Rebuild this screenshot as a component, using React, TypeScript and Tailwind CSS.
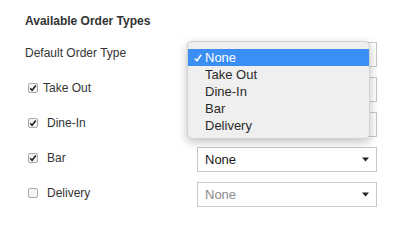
import React from "react";

const FONT = { fontFamily: '"Liberation Sans", Arial, Helvetica, sans-serif' };

const ORDER_TYPES = ["None", "Take Out", "Dine-In", "Bar", "Delivery"];

function Caret() {
  return (
    <svg width="7" height="5" viewBox="0 0 7 5" className="shrink-0">
      <path d="M0 0.5 L7 0.5 L3.5 4.5 Z" fill="#222" />
    </svg>
  );
}

// covered = sits under the open menu, so its value is not visible
function FakeSelect({ value = "None", disabled = false, covered = false }: { value?: string; disabled?: boolean; covered?: boolean }) {
  return (
    <div className="w-[180px] h-[25px] border border-[#c8c8c8] bg-white flex items-center justify-between pl-[7px] pr-[7px]">
      <span className={disabled ? "text-[13px] text-[#8a8a8a]" : "text-[13px] text-[#1a1a1a]"}>{covered ? "" : value}</span>
      <Caret />
    </div>
  );
}

function Check({ checked }: { checked: boolean }) {
  return (
    <span className="w-[10px] h-[10px] rounded-[2px] border border-[#a9a9a9] bg-[#f4f4f4] flex items-center justify-center shrink-0">
      {checked && (
        <svg width="8" height="8" viewBox="0 0 8 8">
          <path d="M1.2 4.2 L3.1 6.2 L6.8 1.4" stroke="#222" strokeWidth="1.6" fill="none" />
        </svg>
      )}
    </span>
  );
}

export default function App() {
  const rows = [
    { label: "Take Out", checked: true, gap: "ml-[5px]", covered: true },
    { label: "Dine-In", checked: true, gap: "ml-[9px]", covered: true },
    { label: "Bar", checked: true, gap: "ml-[9px]", covered: false },
    { label: "Delivery", checked: false, gap: "ml-[9px]", covered: false },
  ];

  return (
    <div className="relative w-[400px] h-[239px] bg-white overflow-hidden text-[#333]" style={FONT}>
      <div className="pl-[25px] pt-[13px]">
        <h3 className="text-[12px] leading-[16px] font-bold text-[#333]">Available Order Types</h3>

        <div className="mt-[13px] flex flex-col gap-[10px]">
          {/* Default */}
          <div className="flex items-center h-[25px]">
            <span className="w-[172px] text-[12px] -mt-[3px]">Default Order Type</span>
            <FakeSelect covered />
          </div>

          {rows.map((r) => (
            <div key={r.label} className="flex items-center h-[25px]">
              <div className="w-[172px] flex items-center pl-[3px] -mt-[4px]">
                <Check checked={r.checked} />
                <span className={`${r.gap} text-[12px]`}>{r.label}</span>
              </div>
              <FakeSelect disabled={!r.checked} covered={r.covered} />
            </div>
          ))}
        </div>
      </div>

      {/* open dropdown menu */}
      <div className="absolute left-[187px] top-[41px] w-[183px] rounded-[5px] bg-[#efefef] border border-[#d2d2d2] shadow-[0_3px_10px_rgba(0,0,0,0.25)] pt-[7px] pb-[4px]">
        {ORDER_TYPES.map((t, i) => (
          <div
            key={t}
            className={
              i === 0
                ? "h-[17px] flex items-center bg-[#3b8ef3] text-white text-[13px]"
                : "h-[17px] flex items-center text-[#2a2a2a] text-[13px]"
            }
          >
            <span className="w-[17px] pl-[6px] flex items-center">
              {i === 0 && (
                <svg width="8" height="8" viewBox="0 0 8 8">
                  <path d="M0.8 4.4 L3 6.8 L7.2 0.8" stroke="#fff" strokeWidth="1.5" fill="none" />
                </svg>
              )}
            </span>
            <span>{t}</span>
          </div>
        ))}
      </div>
    </div>
  );
}
